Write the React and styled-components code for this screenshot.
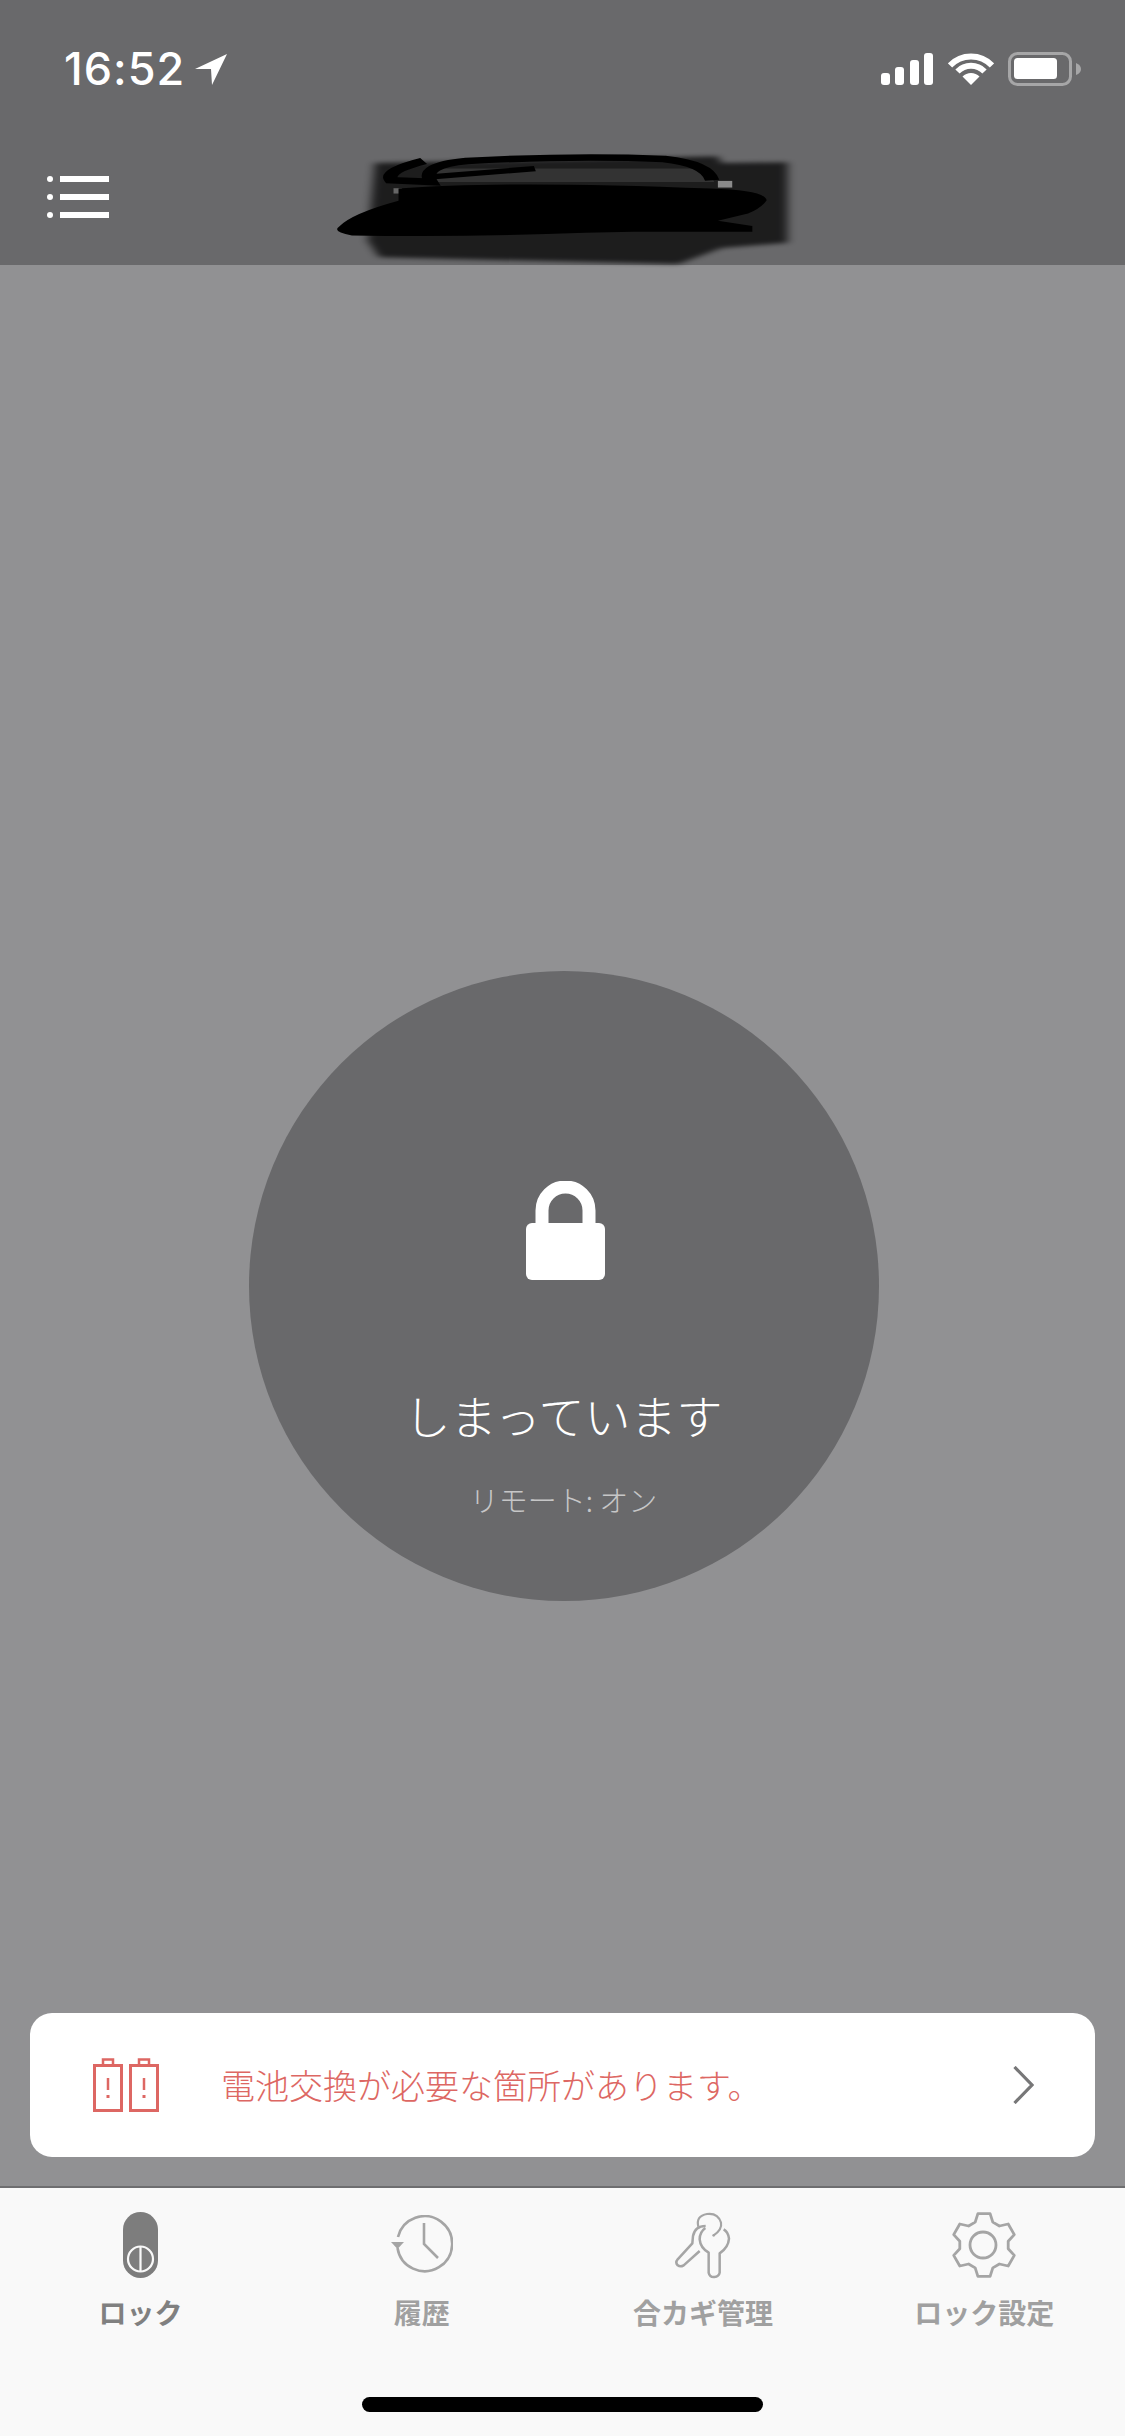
import React from "react";
import styled, { createGlobalStyle } from "styled-components";

const GlobalStyle = createGlobalStyle`
  html, body {
    margin: 0;
    padding: 0;
    background: #919193;
  }
  * {
    box-sizing: border-box;
  }
`;

const cjk = `"Noto Sans CJK JP", "Noto Sans", sans-serif`;

const Page = styled.div`
  position: relative;
  display: flex;
  flex-direction: column;
  width: 1125px;
  height: 2436px;
  overflow: hidden;
  font-family: ${cjk};
  background: #919193;
`;

const Header = styled.header`
  position: relative;
  display: flex;
  flex-direction: column;
  flex: 0 0 265px;
  background: #69696b;
`;

const StatusBar = styled.div`
  display: flex;
  align-items: center;
  justify-content: space-between;
  height: 138px;
  padding: 0 44px 0 64px;
`;

const TimeGroup = styled.div`
  display: flex;
  align-items: center;
  gap: 10px;
`;

const Time = styled.span`
  font-family: Inter, "Liberation Sans", sans-serif;
  font-size: 45px;
  font-weight: 500;
  line-height: 50px;
  letter-spacing: 1px;
  color: #ffffff;
`;

const StatusIcons = styled.div`
  display: flex;
  align-items: center;
  gap: 14.5px;
`;

const NavRow = styled.div`
  display: flex;
  align-items: flex-start;
  padding: 38px 47px 0;
`;

const Redaction = styled.svg`
  position: absolute;
  left: 316px;
  top: 147px;
  width: 488px;
  height: 123px;
  overflow: visible;
`;

const Main = styled.main`
  display: flex;
  flex: 1;
  flex-direction: column;
  align-items: center;
  padding: 706px 30px 29px;
`;

const LockButton = styled.div`
  display: flex;
  flex-direction: column;
  align-items: center;
  width: 630px;
  height: 630px;
  margin-left: 2px;
  padding-top: 210px;
  border-radius: 50%;
  background: #69696b;
`;

const LockGlyphWrap = styled.div`
  display: flex;
  margin-left: 4px;
`;

const LockTitle = styled.div`
  margin-top: 104px;
  font-size: 46px;
  font-weight: 300;
  line-height: 60px;
  color: #ffffff;
`;

const LockSub = styled.div`
  margin-top: 35px;
  font-size: 29px;
  font-weight: 300;
  line-height: 40px;
  color: #c6c6c7;
`;

const Notice = styled.div`
  display: flex;
  align-items: center;
  width: 100%;
  height: 144px;
  margin-top: auto;
  padding: 0 61px 0 63px;
  border-radius: 22px;
  background: #ffffff;
`;

const NoticeText = styled.span`
  flex: 1;
  margin-left: 62px;
  font-size: 34px;
  font-weight: 300;
  line-height: 46px;
  color: #dd6763;
`;

const TabBar = styled.nav`
  display: grid;
  flex: 0 0 250px;
  grid-template-columns: repeat(4, 1fr);
  align-items: start;
  padding-top: 24px;
  border-top: 2px solid #6e6e70;
  background: #f9f9f9;
`;

const Tab = styled.div`
  display: flex;
  flex-direction: column;
  align-items: center;
`;

const TabIcon = styled.div`
  display: flex;
  align-items: center;
  justify-content: center;
  height: 66px;
`;

const TabLabel = styled.span`
  margin-top: 16px;
  font-size: 28px;
  font-weight: 700;
  line-height: 36px;
  color: ${(props) => (props.$active ? "#808080" : "#a0a0a0")};
`;

const HomeBar = styled.div`
  position: absolute;
  left: 362px;
  bottom: 24px;
  width: 401px;
  height: 15px;
  border-radius: 8px;
  background: #000000;
`;

const LocationArrow = () => (
  <svg width="32" height="31" viewBox="0 0 32 31">
    <polygon points="32,0 0,15 16,15 17,31" fill="#fff" />
  </svg>
);

const SignalIcon = () => (
  <svg width="52" height="32" viewBox="0 0 52 32" fill="#fff">
    <rect x="0" y="20" width="9" height="12" rx="3" />
    <rect x="14" y="14" width="9" height="18" rx="3" />
    <rect x="29" y="7" width="9" height="25" rx="3" />
    <rect x="43" y="0" width="9" height="32" rx="3" />
  </svg>
);

const WifiIcon = () => (
  <svg width="46" height="32" viewBox="0 0 46 32">
    <g fill="none" stroke="#fff" strokeWidth="6">
      <path d="M2 12.5 A29 29 0 0 1 44 12.5" />
      <path d="M9.5 18.5 A19 19 0 0 1 36.5 18.5" />
    </g>
    <path d="M23 32 L14.5 23.5 A12 12 0 0 1 31.5 23.5 Z" fill="#fff" />
  </svg>
);

const BatteryIcon = () => (
  <svg width="73" height="34" viewBox="0 0 73 34">
    <rect x="1.5" y="1.5" width="61" height="31" rx="8" fill="none" stroke="#a6a6a7" strokeWidth="3" />
    <rect x="6" y="6" width="43" height="21" rx="3.5" fill="#fff" />
    <path d="M68 11 Q73 13 73 17 Q73 21 68 23 Z" fill="#a6a6a7" />
  </svg>
);

const MenuIcon = () => (
  <svg width="62" height="42" viewBox="0 0 62 42" fill="#fff">
    <rect x="0" y="0" width="6" height="6" rx="3" />
    <rect x="13" y="0" width="49" height="6" />
    <rect x="0" y="18" width="6" height="6" rx="3" />
    <rect x="13" y="18" width="49" height="6" />
    <rect x="0" y="36" width="6" height="6" rx="3" />
    <rect x="13" y="36" width="49" height="6" />
  </svg>
);

// scribbled-out title, coordinates follow the stretched crop so they are not square
const TitleScribble = () => (
  <Redaction viewBox="440 440 680 370" preserveAspectRatio="none">
    <defs>
      <filter id="smear" x="-10%" y="-20%" width="120%" height="140%">
        <feGaussianBlur stdDeviation="7" />
      </filter>
    </defs>
    <path
      d="M522 488 L1000 468 L1005 488 L1097 486 L1097 728 L1005 744 L945 792 L528 772 L512 722 Z"
      fill="#000"
      opacity="0.72"
      filter="url(#smear)"
    />
    <path d="M600 505 L985 505 L995 545 L600 545 Z" fill="#333" />
    <rect x="1000" y="542" width="20" height="20" fill="#8a8a8a" />
    <rect x="548" y="564" width="12" height="16" fill="#666" />
    <path
      d="M472 680 Q490 640 555 602 L555 565 Q700 540 990 565 Q1065 570 1068 600 Q1060 625 1042 640 L1000 662 L1048 678 L1048 695 L882 695 L815 698 Q650 712 490 706 Q462 695 472 680 Z"
      fill="#000"
    />
    <path
      d="M590 482 Q535 512 545 540 L600 545 Q585 495 650 482 Q800 465 925 476 Q985 490 992 540"
      fill="none"
      stroke="#000"
      strokeWidth="20"
    />
    <path d="M600 530 L745 505" fill="none" stroke="#000" strokeWidth="16" />
  </Redaction>
);

const LockGlyph = () => (
  <svg width="79" height="99" viewBox="0 0 79 99">
    <path d="M16 46 V29.5 A23.5 23.5 0 0 1 63 29.5 V46" fill="none" stroke="#fff" strokeWidth="13" />
    <rect x="0" y="42" width="79" height="57" rx="6" fill="#fff" />
  </svg>
);

const BatteryAlertIcon = () => (
  <svg width="66" height="54" viewBox="0 0 66 54" fill="none" stroke="#dd6763" strokeWidth="3">
    {[0, 36].map((x) => (
      <g key={x} transform={`translate(${x} 0)`}>
        <rect x="1.5" y="7.5" width="27" height="45" />
        <rect x="10" y="1.5" width="10" height="6" strokeWidth="2.5" />
        <path d="M15 20 V32" strokeWidth="2.5" />
        <path d="M15 37 V40" strokeWidth="3" />
      </g>
    ))}
  </svg>
);

const Chevron = () => (
  <svg width="21" height="38" viewBox="0 0 21 38">
    <path d="M1.5 1 L19 19 L1.5 37" fill="none" stroke="#777778" strokeWidth="3.2" />
  </svg>
);

const LockTabIcon = () => (
  <svg width="35" height="66" viewBox="0 0 35 66">
    <rect width="35" height="66" rx="17.5" fill="#7d7d7d" />
    <circle cx="17.5" cy="47" r="12.5" fill="none" stroke="#f9f9f9" strokeWidth="2.2" />
    <path d="M17.5 34 V60" stroke="#f9f9f9" strokeWidth="2.2" />
  </svg>
);

const ClockIcon = () => (
  <svg width="62" height="60" viewBox="0 0 62 60" fill="none" stroke="#a5a5a5" strokeWidth="2.6">
    <path d="M6.5 33 A27.5 27.5 0 1 0 7 22" />
    <path d="M33 8 V29 L47 43" />
    <path d="M0 27 H13 L6.5 34 Z" fill="#a5a5a5" stroke="none" />
  </svg>
);

const KeysIcon = () => (
  <svg width="60" height="68" viewBox="70 45 180 204" fill="none" stroke="#a5a5a5" strokeWidth="7.5" strokeLinejoin="round">
    <path d="M167 96 Q150 108 150 130 Q152 155 177 170 L177 230 Q180 244 194 243 Q208 242 210 230 L210 172 Q236 155 238 128 Q236 108 222 100" />
    <path d="M168 90 Q136 90 130 120 L128 142 L84 190 Q76 200 84 208 Q92 214 102 208 L150 165" />
    <path d="M146 92 Q138 60 172 54 Q205 50 214 80 Q218 100 192 118" strokeWidth="6.5" />
    <circle cx="192" cy="118" r="4" fill="#a5a5a5" stroke="none" />
  </svg>
);

const gearPath = (() => {
  const cx = 34;
  const cy = 34;
  const point = (r, deg) => {
    const a = (deg * Math.PI) / 180;
    return `${(cx + r * Math.sin(a)).toFixed(1)} ${(cy - r * Math.cos(a)).toFixed(1)}`;
  };
  let d = "";
  for (let i = 0; i < 6; i++) {
    const t = i * 60;
    d += `${i ? "L" : "M"}${point(24.5, t - 21)} L${point(32, t - 11)} L${point(32, t + 11)} L${point(24.5, t + 21)} `;
  }
  return d + "Z";
})();

const GearIcon = () => (
  <svg width="68" height="68" viewBox="0 0 68 68" fill="none" stroke="#a5a5a5" strokeWidth="2.8" strokeLinejoin="round">
    <path d={gearPath} />
    <circle cx="33" cy="34" r="13" />
  </svg>
);

const tabs = [
  { label: "ロック", icon: <LockTabIcon />, active: true },
  { label: "履歴", icon: <ClockIcon /> },
  { label: "合カギ管理", icon: <KeysIcon /> },
  { label: "ロック設定", icon: <GearIcon /> },
];

const App = () => {
  return (
    <Page>
      <GlobalStyle />
      <Header>
        <StatusBar>
          <TimeGroup>
            <Time>16:52</Time>
            <LocationArrow />
          </TimeGroup>
          <StatusIcons>
            <SignalIcon />
            <WifiIcon />
            <BatteryIcon />
          </StatusIcons>
        </StatusBar>
        <NavRow>
          <MenuIcon />
        </NavRow>
        <TitleScribble />
      </Header>
      <Main>
        <LockButton>
          <LockGlyphWrap>
            <LockGlyph />
          </LockGlyphWrap>
          <LockTitle>しまっています</LockTitle>
          <LockSub>リモート: オン</LockSub>
        </LockButton>
        <Notice>
          <BatteryAlertIcon />
          <NoticeText>電池交換が必要な箇所があります。</NoticeText>
          <Chevron />
        </Notice>
      </Main>
      <TabBar>
        {tabs.map((tab) => (
          <Tab key={tab.label}>
            <TabIcon>{tab.icon}</TabIcon>
            <TabLabel $active={tab.active}>{tab.label}</TabLabel>
          </Tab>
        ))}
      </TabBar>
      <HomeBar />
    </Page>
  );
};

export default App;
